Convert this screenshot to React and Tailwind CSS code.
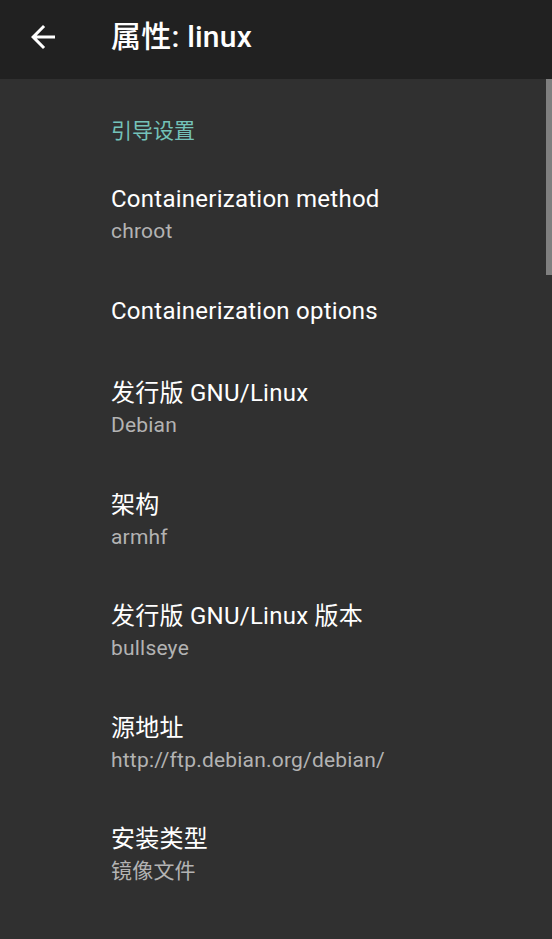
import React from "react";

const font = { fontFamily: "Roboto, 'Noto Sans CJK SC', sans-serif" };

const rows = [
  { title: "Containerization method", summary: "chroot" },
  { title: "Containerization options" },
  { title: "发行版 GNU/Linux", summary: "Debian" },
  { title: "架构", summary: "armhf" },
  { title: "发行版 GNU/Linux 版本", summary: "bullseye" },
  { title: "源地址", summary: "http://ftp.debian.org/debian/" },
  { title: "安装类型", summary: "镜像文件" },
];

function Row({ title, summary }) {
  const two = summary !== undefined;
  return (
    <div
      className={
        "flex flex-col pl-[111px] pr-4 pt-[25px] " +
        (two ? "h-[111.5px]" : "h-[82.5px]")
      }
    >
      <div className="text-[24px] leading-[32px] tracking-[0.25px] text-white">{title}</div>
      {two && (
        <div className="mt-[2px] text-[21px] leading-[28px] tracking-[0.2px] text-[#b3b3b3]">
          {summary}
        </div>
      )}
    </div>
  );
}

export default function App() {
  return (
    <div
      className="relative flex h-[939px] w-[552px] flex-col overflow-hidden bg-[#303030]"
      style={font}
    >
      <div className="flex h-[79px] shrink-0 items-center bg-[#212121] pb-[5px]">
        <div className="flex w-[111px] items-center pl-[25px]">
          <svg width="36" height="36" viewBox="0 0 24 24" fill="white">
            <path d="M20 11H7.83l5.59-5.59L12 4l-8 8 8 8 1.41-1.41L7.83 13H20v-2z" />
          </svg>
        </div>
        <div className="text-[30px] font-medium leading-[36px] tracking-[0.2px] text-white">
          属性: linux
        </div>
      </div>
      <div className="relative flex-1 overflow-hidden">
        <div className="h-[79px] pl-[111px] pt-[38px] text-[21px] leading-[28px] text-[#74c2b9]">
          引导设置
        </div>
        {rows.map((r, i) => (
          <Row key={i} {...r} />
        ))}
        <div className="absolute right-0 top-0 h-[196px] w-[6px] bg-[#7f7f7f]" />
      </div>
    </div>
  );
}
